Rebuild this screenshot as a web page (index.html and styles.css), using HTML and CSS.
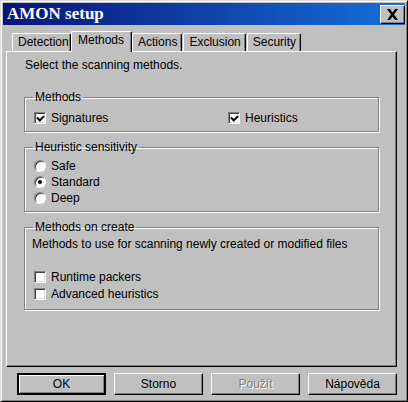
FILE: index.html
```html
<!DOCTYPE html>
<html lang="en">
<head>
  <meta charset="UTF-8" />
  <title>AMON setup</title>
  <link rel="stylesheet" href="styles.css">
</head>
<body>

<div class="window">
  <!-- title bar -->
  <div class="titlebar">
    <span class="title">AMON setup</span>
    <button class="close-btn">
      <svg width="13" height="11" viewBox="0 0 13 11">
        <path d="M1 0 L4 0 L6.5 3.5 L9 0 L12 0 L8 5.5 L12 11 L9 11 L6.5 7.5 L4 11 L1 11 L5 5.5 Z" fill="#000"/>
      </svg>
    </button>
  </div>

  <!-- tabs -->
  <div class="tabs">
    <div class="tab">Detection</div>
    <div class="tab active">Methods</div>
    <div class="tab">Actions</div>
    <div class="tab">Exclusion</div>
    <div class="tab">Security</div>
  </div>

  <div class="panel">
    <p class="intro">Select the scanning methods.</p>

    <fieldset class="group group-methods">
      <legend>Methods</legend>
      <div class="two-col">
        <label class="opt"><span class="check on"></span>Signatures</label>
        <label class="opt"><span class="check on"></span>Heuristics</label>
      </div>
    </fieldset>

    <fieldset class="group group-sens">
      <legend>Heuristic sensitivity</legend>
      <label class="opt"><span class="radio"></span>Safe</label>
      <label class="opt"><span class="radio on"></span>Standard</label>
      <label class="opt"><span class="radio"></span>Deep</label>
    </fieldset>

    <fieldset class="group group-create">
      <legend>Methods on create</legend>
      <p class="note">Methods to use for scanning newly created or modified files</p>
      <label class="opt"><span class="check"></span>Runtime packers</label>
      <label class="opt"><span class="check"></span>Advanced heuristics</label>
    </fieldset>
  </div>

  <!-- bottom buttons -->
  <div class="buttons">
    <button class="btn default">OK</button>
    <button class="btn">Storno</button>
    <button class="btn disabled">Použít</button>
    <button class="btn">Nápověda</button>
  </div>
</div>

</body>
</html>
```

FILE: styles.css
```css
* {
  box-sizing: border-box;
}

body {
  margin: 0;
  background: #c0c0c0;
  font-family: "Liberation Sans", Arial, sans-serif;
  font-size: 12px;
  color: #000;
}

/* window frame */
.window {
  width: 408px;
  height: 402px;
  background: #c0c0c0;
  border: 1px solid #000;
  border-top-color: #dcdcdc;
  border-left-color: #dcdcdc;
  box-shadow: inset 1px 1px 0 #fff, inset -1px -1px 0 #808080;
  padding: 2px;
}

.titlebar {
  height: 22px;
  background: linear-gradient(to right, #0a1478, #1470d8);
  display: flex;
  align-items: center;
  justify-content: space-between;
  padding: 0 0 0 4px;
}

.title {
  font-family: "Liberation Serif", "Times New Roman", serif;
  font-weight: bold;
  font-size: 17px;
  color: #fff;
}

.close-btn {
  width: 25px;
  height: 19px;
  padding: 0;
  background: #c0c0c0;
  border: 1px solid #000;
  border-top-color: #fff;
  border-left-color: #fff;
  box-shadow: inset -1px -1px 0 #808080;
  display: flex;
  align-items: center;
  justify-content: center;
}

/* tabs */
.tabs {
  display: flex;
  margin: 6px 0 0 9px;
  height: 20px;
  align-items: flex-end;
  position: relative;
  z-index: 1;
}

.tab {
  height: 18px;
  padding: 0 4px 0 5px;
  border: 1px solid #fff;
  border-bottom: none;
  border-right: 1px solid #000;
  box-shadow: inset -1px 0 0 #808080;
  border-radius: 2px 2px 0 0;
  line-height: 17px;
  background: #c0c0c0;
  margin-right: 1px;
}

.tab:first-child {
  width: 59px;
}

.tab.active {
  height: 21px;
  margin: 0 0 -1px -1px;
  padding: 0 7px 0 6px;
  line-height: 16px;
}

.panel {
  width: 391px;
  height: 316px;
  margin-left: 3px;
  border: 1px solid #000;
  border-top-color: #fff;
  border-left-color: #fff;
  box-shadow: inset -1px -1px 0 #808080;
  padding: 6px 16px 0 16px;
}

.intro {
  margin: 0 0 0 2px;
  line-height: 14px;
}

/* group boxes */
.group {
  margin: 0 0 0 1px;
  width: 355px;
  border: 1px solid #808080;
  box-shadow: 1px 1px 0 #fff, inset 1px 1px 0 #fff;
  padding: 0 0 0 9px;
}

.group legend {
  padding: 0 2px;
  margin-left: -1px;
  line-height: 12px;
}

.group-methods {
  margin-top: 19px;
  height: 41px;
  padding-top: 7px;
}

.group-sens {
  margin-top: 9px;
  height: 71px;
  padding-top: 5px;
}

.group-create {
  margin-top: 9px;
  height: 89px;
  padding-top: 4px;
}

.group-sens .opt {
  height: 16px;
}

.two-col {
  display: grid;
  grid-template-columns: 194px 1fr;
}

.opt {
  display: flex;
  align-items: center;
  height: 16.5px;
}

.note {
  margin: 0 0 17px -2px;
  line-height: 15px;
}

.check {
  width: 12px;
  height: 12px;
  margin-right: 5px;
  background: #fff;
  border: 1px solid #808080;
  border-right-color: #fff;
  border-bottom-color: #fff;
  box-shadow: inset 1px 1px 0 #404040, inset -1px -1px 0 #dfdfdf;
  position: relative;
}

.check.on::after {
  content: "";
  position: absolute;
  left: 2px;
  top: 1px;
  width: 5px;
  height: 3px;
  border-left: 2px solid #000;
  border-bottom: 2px solid #000;
  transform: translate(0, 1px) rotate(-45deg);
  transform-origin: center;
}

.radio {
  width: 12px;
  height: 12px;
  margin-right: 5px;
  border-radius: 50%;
  background: #fff;
  border: 1px solid;
  border-color: #808080 #fff #fff #808080;
  box-shadow: inset 1px 1px 0 #404040;
  position: relative;
}

.radio.on::after {
  content: "";
  position: absolute;
  left: 3px;
  top: 3px;
  width: 4px;
  height: 4px;
  border-radius: 50%;
  background: #000;
}

/* buttons */
.buttons {
  display: flex;
  gap: 8px;
  margin: 6px 0 0 14px;
}

.btn {
  width: 89px;
  height: 22px;
  padding: 0;
  font-family: "Liberation Sans", Arial, sans-serif;
  font-size: 12px;
  color: #000;
  background: #c0c0c0;
  border: 1px solid #000;
  border-top-color: #fff;
  border-left-color: #fff;
  box-shadow: inset -1px -1px 0 #808080;
}

.btn.default {
  border: 2px solid #000;
  box-shadow: inset 1px 1px 0 #fff, inset -1px -1px 0 #808080;
}

.btn.disabled {
  color: #808080;
  text-shadow: 1px 1px 0 #fff;
}
```
